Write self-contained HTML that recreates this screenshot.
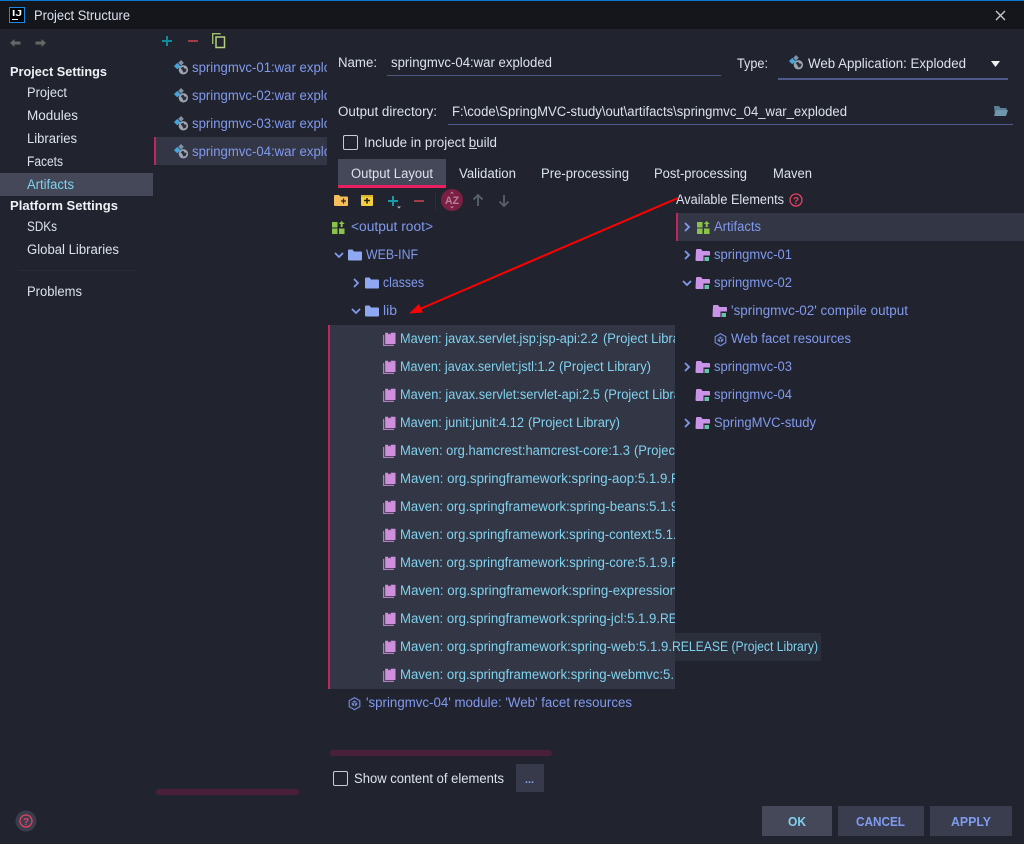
<!DOCTYPE html>
<html><head><meta charset="utf-8"><title>Project Structure</title>
<style>
html,body{margin:0;padding:0;background:#21242e;width:1024px;height:844px;overflow:hidden}
svg{display:block}
text{font-family:"Liberation Sans","Noto Sans CJK SC",sans-serif;font-size:13.5px;white-space:pre}
.n{fill:#dce2ec}.b{fill:#8199ee}.c{fill:#80d2ee}.h{fill:#eef1f6;font-weight:bold;font-size:13px}
.s{font-size:12.5px;font-weight:bold}
</style></head><body>
<svg width="1024" height="844" viewBox="0 0 1024 844" xmlns="http://www.w3.org/2000/svg">
<defs>
<clipPath id="cl"><rect x="154" y="50" width="173" height="120"/></clipPath>
<clipPath id="cm"><rect x="328" y="325" width="347" height="364"/></clipPath>
<symbol id="art" viewBox="0 0 16 16" overflow="visible"><path d="M7.500 0l3 3-3 3-3-3z" fill="#7f93a8"/><path d="M3.500 3l3.500 3.500-3.500 3.500-3.500-3.500z" fill="#45a5dc"/><circle cx="10" cy="10.500" r="5" fill="#9aa4b2"/><path d="M7 8.500l3-1.500 1 2 2.500 .5-1 3-2.500 1-1-2.500z" fill="#2b2f3a"/></symbol>
<symbol id="bk" viewBox="0 0 13 14" overflow="visible"><path d="M.6 3v10.400h10.400" fill="none" stroke="#b27bbb" stroke-width="1.300"/><path d="M2.200 .8h3v1.700l1.200-.8 1.200 .8v-1.700h4.900v11.200h-10.300z" fill="#d08fdc"/></symbol>
<symbol id="fd" viewBox="0 0 14 12" overflow="visible"><path d="M0 1.500q0-1 1-1h3.500l1.500 2h7q1 0 1 1v7q0 1-1 1h-12q-1 0-1-1z" fill="#8ea8f2"/></symbol>
<symbol id="mf" viewBox="0 0 14 12" overflow="visible"><path d="M0 1q0-1 1-1h4l1.500 2h6.500q1 0 1 1v3.500h-6.500v5.500h-7q-1 0-1-1z" fill="#cb93e8"/><rect x="8.500" y="8" width="4.500" height="4" fill="#66c2a8"/></symbol>
<symbol id="ga" viewBox="0 0 13 13" overflow="visible"><rect x="0" y="1" width="5.500" height="5.500" fill="#8bc34a"/><rect x="0" y="7.500" width="5.500" height="5.500" fill="#8bc34a"/><rect x="7" y="7.500" width="5.500" height="5.500" fill="#8bc34a"/><path d="M9.700 0l3 3h-2v3h-2v-3h-2z" fill="#8bc34a"/></symbol>
<symbol id="wf" viewBox="0 0 13 13" overflow="visible"><path d="M6.500 .7l5.300 3v6l-5.300 3-5.300-3v-6z" fill="none" stroke="#6f86d6" stroke-width="1.200"/><path d="M6.500 3.500l2.800 1.500v3l-2.800 1.500-2.800-1.500v-3z" fill="#6f86d6"/><path d="M6.500 6.200v3M3.900 5l2.600 1.300 2.600-1.300" stroke="#21242e" stroke-width=".8" fill="none"/></symbol>
</defs>

<rect width="1024" height="844" fill="#21242e"/>
<!-- title bar -->
<rect width="1024" height="29" fill="#15161c"/>
<rect width="1024" height="1" fill="#0a78d2"/>
<rect x="9.500" y="7.500" width="15" height="15" fill="#000" stroke="#1e88e5"/>
<text x="12" y="16" style="font-size:8px;font-weight:bold" fill="#fff" textLength="10" lengthAdjust="spacingAndGlyphs">IJ</text>
<rect x="12" y="19" width="6" height="1" fill="#fff"/>
<text x="34" y="20" class="n" textLength="96" lengthAdjust="spacingAndGlyphs">Project Structure</text>
<path d="M996 11l9 9M1005 11l-9 9" stroke="#c8ccd4" stroke-width="1.300" fill="none"/>

<!-- nav arrows -->
<path d="M10 43l4.500-4v2.500h6v3h-6v2.500z" fill="#666"/>
<path d="M46 43l-4.500-4v2.500h-6v3h6v2.500z" fill="#666"/>

<!-- sidebar -->
<rect x="0" y="173" width="153" height="23" fill="#444859"/>
<text x="10" y="76" class="h" textLength="97" lengthAdjust="spacingAndGlyphs">Project Settings</text>
<text x="27" y="97" class="n" textLength="40" lengthAdjust="spacingAndGlyphs">Project</text>
<text x="27" y="120" class="n" textLength="51" lengthAdjust="spacingAndGlyphs">Modules</text>
<text x="27" y="143" class="n" textLength="50" lengthAdjust="spacingAndGlyphs">Libraries</text>
<text x="27" y="166" class="n" textLength="36" lengthAdjust="spacingAndGlyphs">Facets</text>
<text x="27" y="189" class="c" textLength="47" lengthAdjust="spacingAndGlyphs">Artifacts</text>
<text x="10" y="210" class="h" textLength="108" lengthAdjust="spacingAndGlyphs">Platform Settings</text>
<text x="27" y="231" class="n" textLength="30" lengthAdjust="spacingAndGlyphs">SDKs</text>
<text x="27" y="254" class="n" textLength="92" lengthAdjust="spacingAndGlyphs">Global Libraries</text>
<rect x="18" y="270" width="118" height="1" fill="#282b36"/>
<text x="27" y="296" class="n" textLength="55" lengthAdjust="spacingAndGlyphs">Problems</text>

<!-- artifact list toolbar -->
<path d="M167 36v10M162 41h10" stroke="#0f8c9c" stroke-width="2"/>
<path d="M188 41h10" stroke="#a33a48" stroke-width="2"/>
<path d="M212.700 44v-10.300h8" fill="none" stroke="#9cc06a" stroke-width="1.400"/>
<rect x="216" y="37" width="8.500" height="10.500" fill="none" stroke="#b5d07f" stroke-width="1.500"/>

<!-- artifact list -->
<rect x="154" y="137" width="173" height="28" fill="#333645"/>
<rect x="154" y="137" width="2" height="28" fill="#c2255f"/>
<g clip-path="url(#cl)">
<use href="#art" x="174" y="60" width="15" height="15"/>
<use href="#art" x="174" y="88" width="15" height="15"/>
<use href="#art" x="174" y="116" width="15" height="15"/>
<use href="#art" x="174" y="144" width="15" height="15"/>
<text x="192" y="72" class="b" textLength="161" lengthAdjust="spacingAndGlyphs">springmvc-01:war exploded</text>
<text x="192" y="100" class="b" textLength="161" lengthAdjust="spacingAndGlyphs">springmvc-02:war exploded</text>
<text x="192" y="128" class="b" textLength="161" lengthAdjust="spacingAndGlyphs">springmvc-03:war exploded</text>
<text x="192" y="156" class="b" textLength="161" lengthAdjust="spacingAndGlyphs">springmvc-04:war exploded</text>
</g>
<rect x="156" y="789" width="143" height="6" rx="3" fill="#4a2038"/>

<!-- form -->
<text x="338" y="67" class="n" textLength="39" lengthAdjust="spacingAndGlyphs">Name:</text>
<text x="391" y="67" class="n" textLength="161" lengthAdjust="spacingAndGlyphs">springmvc-04:war exploded</text>
<rect x="387" y="75" width="334" height="1" fill="#4e5880"/>
<text x="737" y="68" class="n" textLength="31" lengthAdjust="spacingAndGlyphs">Type:</text>
<use href="#art" x="789" y="55" width="15" height="15"/>
<text x="808" y="68" class="n" textLength="158" lengthAdjust="spacingAndGlyphs">Web Application: Exploded</text>
<path d="M991 61h9l-4.500 6z" fill="#f0f0f0"/>
<rect x="778" y="78" width="230" height="2" fill="#50598a"/>
<text x="338" y="116" class="n" textLength="99" lengthAdjust="spacingAndGlyphs">Output directory:</text>
<text x="452" y="116" class="n" textLength="395" lengthAdjust="spacingAndGlyphs">F:\code\SpringMVC-study\out\artifacts\springmvc_04_war_exploded</text>
<rect x="448" y="124" width="565" height="1" fill="#4e5a90"/>
<path d="M994 106h5l1.500 2h6v2h-10l-1.500 5z" fill="#5a7f96"/><path d="M996 110h12l-2 6h-12z" fill="#6f97ad"/>
<rect x="343.500" y="135.500" width="14" height="14" rx="1.500" fill="none" stroke="#c8ccd4"/>
<text x="364" y="147" class="n" textLength="133" lengthAdjust="spacingAndGlyphs">Include in project build</text>
<rect x="469" y="148" width="8" height="1" fill="#cfd4de"/>

<!-- tabs -->
<rect x="338" y="159" width="108" height="29" fill="#444859"/>
<rect x="338" y="185" width="108" height="3" fill="#e91e63"/>
<text x="351" y="178" class="n" textLength="82" lengthAdjust="spacingAndGlyphs">Output Layout</text>
<text x="459" y="178" class="n" textLength="57" lengthAdjust="spacingAndGlyphs">Validation</text>
<text x="541" y="178" class="n" textLength="88" lengthAdjust="spacingAndGlyphs">Pre-processing</text>
<text x="654" y="178" class="n" textLength="93" lengthAdjust="spacingAndGlyphs">Post-processing</text>
<text x="773" y="178" class="n" textLength="39" lengthAdjust="spacingAndGlyphs">Maven</text>

<!-- layout toolbar -->
<path d="M334 196q0-1 1-1h4l1.500 1.500h6.500q1 0 1 1v7.500q0 1-1 1h-12q-1 0-1-1z" fill="#f5bd5c"/>
<path d="M341 201h5M343.500 198.500v5" stroke="#2a2418" stroke-width="1.300"/>
<rect x="361" y="195" width="12" height="11" rx="1" fill="#f4d03f"/>
<rect x="361" y="195" width="12" height="2" fill="#d9b52e"/>
<path d="M364 200.500h6M367 198v5.500" stroke="#2a2418" stroke-width="1.600"/>
<path d="M393 196v10M388 201h10" stroke="#1a9aa8" stroke-width="2"/>
<path d="M397 206.500h4l-2 2z" fill="#b8bcc4"/>
<path d="M414 201h10" stroke="#a33a48" stroke-width="2"/>
<rect x="435" y="191" width="1" height="20" fill="#2a2d38"/>
<circle cx="452" cy="200" r="11" fill="#7c1f45"/>
<text x="445" y="204" style="font-size:11px;font-weight:bold" fill="#b78298" textLength="14" lengthAdjust="spacingAndGlyphs">AZ</text>
<path d="M450 193.500h4l-2-2zM450 206.500h4l-2 2z" fill="#b78298"/>
<path d="M478 206v-11M473.500 199.500l4.500-4.500 4.500 4.500" fill="none" stroke="#5c606a" stroke-width="1.800"/>
<path d="M504 195v11M499.500 201.500l4.500 4.500 4.500-4.500" fill="none" stroke="#5c606a" stroke-width="1.800"/>

<!-- left tree -->
<rect x="328" y="325" width="347" height="364" fill="#333645"/>
<rect x="328" y="325" width="2" height="364" fill="#c2255f"/>
<rect x="675" y="633" width="146" height="28" fill="#2b2e3b"/>
<use href="#ga" x="332" y="221" width="13" height="13"/>
<text x="351" y="231" class="b" textLength="82" lengthAdjust="spacingAndGlyphs">&lt;output root&gt;</text>
<path d="M335 253l4 4 4-4" fill="none" stroke="#8199ee" stroke-width="1.800"/>
<use href="#fd" x="348" y="249" width="14" height="12"/>
<text x="366" y="259" class="b" textLength="52" lengthAdjust="spacingAndGlyphs">WEB-INF</text>
<path d="M354 279l4 4-4 4" fill="none" stroke="#8199ee" stroke-width="1.800"/>
<use href="#fd" x="365" y="277" width="14" height="12"/>
<text x="383" y="287" class="b" textLength="41" lengthAdjust="spacingAndGlyphs">classes</text>
<path d="M352 309l4 4 4-4" fill="none" stroke="#8199ee" stroke-width="1.800"/>
<use href="#fd" x="365" y="305" width="14" height="12"/>
<text x="383" y="315" class="b" textLength="14" lengthAdjust="spacingAndGlyphs">lib</text>

<use href="#bk" x="383" y="332" width="13" height="14"/>
<use href="#bk" x="383" y="360" width="13" height="14"/>
<use href="#bk" x="383" y="388" width="13" height="14"/>
<use href="#bk" x="383" y="416" width="13" height="14"/>
<use href="#bk" x="383" y="444" width="13" height="14"/>
<use href="#bk" x="383" y="472" width="13" height="14"/>
<use href="#bk" x="383" y="500" width="13" height="14"/>
<use href="#bk" x="383" y="528" width="13" height="14"/>
<use href="#bk" x="383" y="556" width="13" height="14"/>
<use href="#bk" x="383" y="584" width="13" height="14"/>
<use href="#bk" x="383" y="612" width="13" height="14"/>
<use href="#bk" x="383" y="640" width="13" height="14"/>
<use href="#bk" x="383" y="668" width="13" height="14"/>
<g clip-path="url(#cm)">
<text x="400" y="343" class="c" textLength="198" lengthAdjust="spacingAndGlyphs">Maven: javax.servlet.jsp:jsp-api:2.2</text>
<text x="603" y="343" class="c" textLength="92" lengthAdjust="spacingAndGlyphs">(Project Library)</text>
<text x="400" y="371" class="c" textLength="155" lengthAdjust="spacingAndGlyphs">Maven: javax.servlet:jstl:1.2</text>
<text x="559" y="371" class="c" textLength="92" lengthAdjust="spacingAndGlyphs">(Project Library)</text>
<text x="400" y="399" class="c" textLength="200" lengthAdjust="spacingAndGlyphs">Maven: javax.servlet:servlet-api:2.5</text>
<text x="604" y="399" class="c" textLength="92" lengthAdjust="spacingAndGlyphs">(Project Library)</text>
<text x="400" y="427" class="c" textLength="124" lengthAdjust="spacingAndGlyphs">Maven: junit:junit:4.12</text>
<text x="528" y="427" class="c" textLength="92" lengthAdjust="spacingAndGlyphs">(Project Library)</text>
<text x="400" y="455" class="c" textLength="230" lengthAdjust="spacingAndGlyphs">Maven: org.hamcrest:hamcrest-core:1.3</text>
<text x="634" y="455" class="c" textLength="92" lengthAdjust="spacingAndGlyphs">(Project Library)</text>
<text x="400" y="483" class="c" textLength="271" lengthAdjust="spacingAndGlyphs">Maven: org.springframework:spring-aop:5.1.9.</text>
<text x="671" y="483" class="c" textLength="146" lengthAdjust="spacingAndGlyphs">RELEASE (Project Library)</text>
<text x="400" y="511" class="c" textLength="271" lengthAdjust="spacingAndGlyphs">Maven: org.springframework:spring-beans:5.1.</text>
<text x="671" y="511" class="c" textLength="156" lengthAdjust="spacingAndGlyphs">9.RELEASE (Project Library)</text>
<text x="400" y="539" class="c" textLength="273" lengthAdjust="spacingAndGlyphs">Maven: org.springframework:spring-context:5.1</text>
<text x="673" y="539" class="c" textLength="160" lengthAdjust="spacingAndGlyphs">.9.RELEASE (Project Library)</text>
<text x="400" y="567" class="c" textLength="271" lengthAdjust="spacingAndGlyphs">Maven: org.springframework:spring-core:5.1.9.</text>
<text x="671" y="567" class="c" textLength="146" lengthAdjust="spacingAndGlyphs">RELEASE (Project Library)</text>
<text x="400" y="595" class="c" textLength="277" lengthAdjust="spacingAndGlyphs">Maven: org.springframework:spring-expression</text>
<text x="677" y="595" class="c" textLength="180" lengthAdjust="spacingAndGlyphs">:5.1.9.RELEASE (Project Library)</text>
<text x="400" y="623" class="c" textLength="260" lengthAdjust="spacingAndGlyphs">Maven: org.springframework:spring-jcl:5.1.9.</text>
<text x="660" y="623" class="c" textLength="146" lengthAdjust="spacingAndGlyphs">RELEASE (Project Library)</text>
<text x="400" y="679" class="c" textLength="274" lengthAdjust="spacingAndGlyphs">Maven: org.springframework:spring-webmvc:5.</text>
<text x="675" y="679" class="c" textLength="160" lengthAdjust="spacingAndGlyphs">1.9.RELEASE (Project Library)</text>
</g>
<text x="400" y="651" class="c" textLength="272" lengthAdjust="spacingAndGlyphs">Maven: org.springframework:spring-web:5.1.9.</text>
<text x="672" y="651" class="c" textLength="146" lengthAdjust="spacingAndGlyphs">RELEASE (Project Library)</text>
<use href="#wf" x="348" y="697" width="13" height="13"/>
<text x="366" y="707" class="b" textLength="266" lengthAdjust="spacingAndGlyphs">'springmvc-04' module: 'Web' facet resources</text>

<!-- right tree -->
<text x="676" y="204" class="n" textLength="108" lengthAdjust="spacingAndGlyphs">Available Elements</text>
<circle cx="796" cy="200" r="6" fill="none" stroke="#e8405f" stroke-width="1.300"/>
<text x="793" y="204" style="font-size:10px;font-weight:bold" fill="#e8405f">?</text>
<rect x="676" y="213" width="348" height="28" fill="#333645"/>
<rect x="676" y="213" width="2" height="28" fill="#c2255f"/>
<path d="M685 223l4 4-4 4" fill="none" stroke="#8199ee" stroke-width="1.800"/>
<use href="#ga" x="697" y="221" width="13" height="13"/>
<text x="714" y="231" class="b" textLength="47" lengthAdjust="spacingAndGlyphs">Artifacts</text>
<path d="M685 251l4 4-4 4" fill="none" stroke="#8199ee" stroke-width="1.800"/>
<use href="#mf" x="696" y="249" width="14" height="12"/>
<text x="714" y="259" class="b" textLength="78" lengthAdjust="spacingAndGlyphs">springmvc-01</text>
<path d="M683 281l4 4 4-4" fill="none" stroke="#8199ee" stroke-width="1.800"/>
<use href="#mf" x="696" y="277" width="14" height="12"/>
<text x="714" y="287" class="b" textLength="78" lengthAdjust="spacingAndGlyphs">springmvc-02</text>
<use href="#mf" x="713" y="305" width="14" height="12"/>
<text x="731" y="315" class="b" textLength="177" lengthAdjust="spacingAndGlyphs">'springmvc-02' compile output</text>
<use href="#wf" x="714" y="333" width="13" height="13"/>
<text x="731" y="343" class="b" textLength="120" lengthAdjust="spacingAndGlyphs">Web facet resources</text>
<path d="M685 363l4 4-4 4" fill="none" stroke="#8199ee" stroke-width="1.800"/>
<use href="#mf" x="696" y="361" width="14" height="12"/>
<text x="714" y="371" class="b" textLength="78" lengthAdjust="spacingAndGlyphs">springmvc-03</text>
<use href="#mf" x="696" y="389" width="14" height="12"/>
<text x="714" y="399" class="b" textLength="78" lengthAdjust="spacingAndGlyphs">springmvc-04</text>
<path d="M685 419l4 4-4 4" fill="none" stroke="#8199ee" stroke-width="1.800"/>
<use href="#mf" x="696" y="417" width="14" height="12"/>
<text x="714" y="427" class="b" textLength="102" lengthAdjust="spacingAndGlyphs">SpringMVC-study</text>

<!-- red arrow -->
<path d="M678 198L420 309" stroke="#ff0000" stroke-width="2" fill="none"/>
<path d="M409 313.500l10-9.500 4 8.500z" fill="#ff0000"/>

<!-- bottom -->
<rect x="330" y="750" width="222" height="6" rx="3" fill="#4a2038"/>
<rect x="333.500" y="771.500" width="14" height="14" rx="1.500" fill="none" stroke="#c8ccd4"/>
<text x="354" y="783" class="n" textLength="150" lengthAdjust="spacingAndGlyphs">Show content of elements</text>
<rect x="516" y="764" width="28" height="28" fill="#373a4a"/>
<text x="525" y="783" style="font-size:11px;font-weight:bold" fill="#8aa4f5" textLength="9" lengthAdjust="spacingAndGlyphs">...</text>

<circle cx="26" cy="821" r="10.500" fill="#3a3d4d"/>
<circle cx="26" cy="821" r="6" fill="none" stroke="#e8405f" stroke-width="1.300"/>
<text x="23" y="825" style="font-size:10px;font-weight:bold" fill="#e8405f">?</text>

<rect x="762" y="806" width="70" height="30" fill="#444859"/>
<text x="788" y="826" class="s c" textLength="18" lengthAdjust="spacingAndGlyphs">OK</text>
<rect x="838" y="806" width="86" height="30" fill="#3a3d4d"/>
<text x="856" y="826" class="s" fill="#7f9cf0" textLength="49" lengthAdjust="spacingAndGlyphs">CANCEL</text>
<rect x="930" y="806" width="82" height="30" fill="#3a3d4d"/>
<text x="951" y="826" class="s" fill="#7f9cf0" textLength="40" lengthAdjust="spacingAndGlyphs">APPLY</text>
</svg>
</body></html>
